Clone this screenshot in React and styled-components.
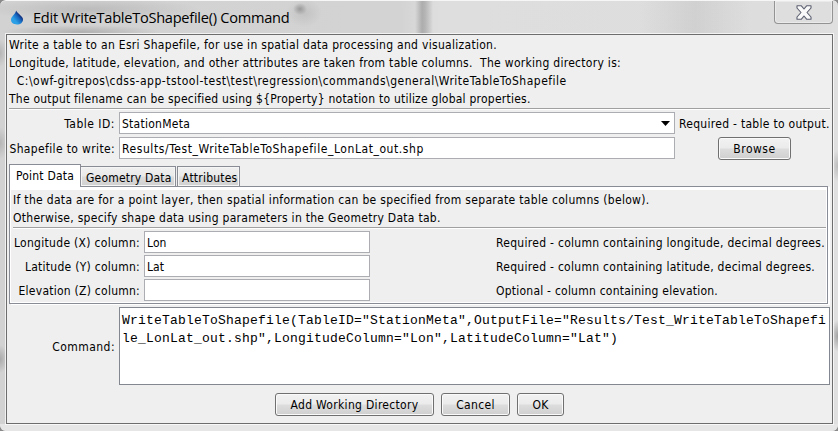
import React from "react";
import styled, { createGlobalStyle } from "styled-components";

const GlobalStyle = createGlobalStyle`
  * { box-sizing: border-box; }
  body { margin: 0; background: #8a8a8a; overflow: hidden; }
`;

const Window = styled.div`
  width: 838px;
  height: 431px;
  display: flex;
  flex-direction: column;
  border-top: 1px solid #f6f6f6;
  border-radius: 6px;
  overflow: hidden;
  color: #000;
  font: 12px "DejaVu Sans Condensed", "DejaVu Sans", sans-serif;
  white-space: pre;
  background:
    radial-gradient(ellipse 7px 6px at 300px 8px, #9a9a9a 0, transparent 100%),
    radial-gradient(ellipse 18px 14px at 304px 12px, #c2c2c2 0, transparent 100%),
    linear-gradient(90deg, transparent 415px, #adadad 422px, #b4b4b4 425px, transparent 433px) 0 0 / 100% 33px no-repeat,
    linear-gradient(90deg, transparent, rgba(200, 200, 200, 0.6) 50%, transparent) 640px 0 / 110px 33px no-repeat,
    radial-gradient(ellipse 110px 11px at 90px 8px, #bcbcbc 0, transparent 100%),
    radial-gradient(ellipse 80px 7px at 80px 31px, #b0b0b0 0, transparent 100%),
    radial-gradient(ellipse 7px 14px at 0 52px, #b5b5b5 0, transparent 100%),
    radial-gradient(ellipse 8px 16px at 0 142px, #b5b5b5 0, transparent 100%),
    radial-gradient(ellipse 8px 14px at 0 358px, #aaa 0, transparent 100%),
    radial-gradient(ellipse 7px 16px at 838px 335px, #a0a0a0 0, transparent 100%),
    radial-gradient(ellipse 7px 16px at 838px 165px, #bbb 0, transparent 100%),
    linear-gradient(#e6e6e6, #e6e6e6) 0 423px / 100% 8px no-repeat,
    linear-gradient(90deg, #d2d2d2, #d3d3d3 400px, #dedede 440px, #dddddd 800px, #e0e0e0);
`;

const TitleBar = styled.header`
  height: 33px;
  flex: none;
  display: flex;
  align-items: flex-start;
  padding: 0 5px 0 11px;
`;

const DropIcon = styled.svg`
  width: 12px;
  height: 15px;
  margin-top: 9px;
`;

const Title = styled.h1`
  margin: 4px auto 0 10px;
  font: 400 14.6px/24px "Open Sans", "Noto Sans", sans-serif;
  letter-spacing: -0.27px;
`;

const CloseButton = styled.button`
  width: 59px;
  height: 23px;
  padding: 0;
  display: flex;
  justify-content: center;
  border: 1px solid #939393;
  border-top: 0;
  border-radius: 0 0 4px 4px;
  background: #dedede;
  box-shadow: inset 0 0 0 1px #eaeaea;
  svg { width: 16px; height: 15px; margin: 4px 0 0 1px; }
`;

const Content = styled.main`
  height: 390px;
  flex: none;
  margin: 0 5px 0 6px;
  padding: 1px 2px 0;
  border: 1px solid #6d6d6d;
  background: #efefef;
  box-shadow: 0 0 0 1px rgba(255, 255, 255, 0.7);
`;

const Notes = styled.div`
  line-height: 18px;
  border-bottom: 1px solid #a0a0a0;
  box-shadow: 0 1px #fff;
  height: ${(p) => p.$height}px;
`;

const NoteLine = styled.div`
  letter-spacing: ${(p) => p.$track}px;
`;

const FormRow = styled.div`
  display: grid;
  grid-template-columns: ${(p) => p.$columns};
  column-gap: 5px;
  height: 22px;
  margin-top: ${(p) => p.$gap}px;
`;

const Label = styled.label`
  height: 22px;
  line-height: 24px;
  justify-self: end;
  margin-right: -1px;
  letter-spacing: ${(p) => p.$track}px;
`;

const Hint = styled.span`
  line-height: 24px;
  letter-spacing: ${(p) => p.$track}px;
`;

const TableHint = styled(Hint)`
  margin-left: -1px;
`;

const AxisHint = styled(Hint)`
  padding-left: 121px;
`;

const Field = styled.div`
  height: 22px;
  display: flex;
  justify-content: space-between;
  padding: 0 4px 0 2px;
  line-height: 22px;
  background: #fff;
  border: 1px solid #abadb3;
  letter-spacing: ${(p) => p.$track}px;
`;

const Arrow = styled.svg`
  width: 9px;
  height: 5px;
  margin-top: 8px;
`;

const Button = styled.button`
  width: ${(p) => p.$width}px;
  height: 23px;
  padding: 0;
  border: 1px solid #707070;
  border-radius: 3px;
  box-shadow: inset 0 0 0 1px #fafafa;
  background: linear-gradient(#f2f2f2, #ebebeb 48%, #dddddd 52%, #cfcfcf);
  font: inherit;
  line-height: 22px;
  color: #000;
  letter-spacing: ${(p) => p.$track}px;
`;

const BrowseButton = styled(Button)`
  margin-left: 38px;
`;

const Tabs = styled.div`
  display: flex;
  align-items: flex-end;
  height: 23px;
  margin-top: 5px;
`;

const Tab = styled.div`
  height: ${(p) => (p.$active ? 23 : 21)}px;
  width: ${(p) => p.$width}px;
  margin-right: ${(p) => p.$after || 0}px;
  padding-left: ${(p) => p.$inset}px;
  line-height: 22px;
  letter-spacing: ${(p) => p.$track}px;
  border: 1px solid #898c95;
  border-bottom: ${(p) => (p.$active ? "0" : "1px solid #898c95")};
  border-left-width: ${(p) => (p.$joined ? 0 : 1)}px;
  background: ${(p) => (p.$active ? "#fff" : "linear-gradient(#f0f0f0, #e9e9e9 48%, #dcdcdc 52%, #d0d0d0)")};
  box-shadow: ${(p) => (p.$active ? "none" : "inset 0 0 0 1px #f5f5f5")};
  position: relative;
`;

const TabPanel = styled.section`
  width: 819px;
  height: 118px;
  margin-top: -1px;
  border: 1px solid #898c95;
  box-shadow: 2px 1px #fff;
  background: #fff;
  padding: 3px 1px 1px;
`;

const TabBody = styled.div`
  height: 112px;
  padding: 1px 0 0 2px;
  background: #efefef;
`;

const CommandRow = styled.div`
  display: grid;
  grid-template-columns: 105px 711px;
  column-gap: 5px;
  align-items: center;
  margin-top: 3px;
`;

const CommandBox = styled.div`
  height: 78px;
  padding: 4px 0 0 2px;
  background: #fff;
  border: 1px solid #828790;
  font: 13px/18px "Liberation Mono", monospace;
  letter-spacing: 0.199px;
`;

const Actions = styled.footer`
  display: flex;
  justify-content: center;
  gap: 7px;
  margin-top: 8px;
`;

const outer = "105px 556px 1fr";
const inner = "126px 226px 1fr";

const axes = [
  { label: "Longitude (X) column:", track: 0.3, value: "Lon", hint: "Required - column containing longitude, decimal degrees.", hintTrack: 0.29 },
  { label: "Latitude (Y) column:", track: 0.27, value: "Lat", hint: "Required - column containing latitude, decimal degrees.", hintTrack: 0.287 },
  { label: "Elevation (Z) column:", track: 0.25, value: "", hint: "Optional - column containing elevation.", hintTrack: 0.227 },
];

export default function App() {
  return (
    <Window>
      <GlobalStyle />
      <TitleBar>
        <DropIcon viewBox="0 0 12 16" preserveAspectRatio="none">
          <defs>
            <linearGradient id="drop" x1="0" y1="1" x2="1" y2="0">
              <stop offset="0.3" stopColor="#2ba0e6" />
              <stop offset="0.55" stopColor="#1768c0" />
              <stop offset="0.75" stopColor="#10206c" />
            </linearGradient>
          </defs>
          <path d="M5 .5C5 4 0 6.500 0 10.500C0 13.500 2.500 15.500 6 15.500S12 13 12 10C12 6.500 7 4.500 5 .5Z" fill="url(#drop)" />
        </DropIcon>
        <Title>Edit WriteTableToShapefile() Command</Title>
        <CloseButton aria-label="Close">
          <svg viewBox="0 0 16 15">
            <path d="M1 .8H5.400L8 4L10.600 .8H15V3L11 7.500L15 12V14.200H10.600L8 11L5.400 14.200H1V12L5 7.500L1 3Z" fill="#fafafa" stroke="#5c6070" strokeWidth="1.100" strokeLinejoin="round" />
          </svg>
        </CloseButton>
      </TitleBar>
      <Content>
        <Notes $height={73}>
          <NoteLine $track={0.296}>Write a table to an Esri Shapefile, for use in spatial data processing and visualization.</NoteLine>
          <NoteLine $track={0.286}>Longitude, latitude, elevation, and other attributes are taken from table columns.  The working directory is:</NoteLine>
          <NoteLine $track={0.49}>{"  C:\\owf-gitrepos\\cdss-app-tstool-test\\test\\regression\\commands\\general\\WriteTableToShapefile"}</NoteLine>
          <NoteLine $track={0.23}>{"The output filename can be specified using ${Property} notation to utilize global properties."}</NoteLine>
        </Notes>
        <FormRow $columns={outer} $gap={3}>
          <Label $track={0.5}>Table ID:</Label>
          <Field $track={0.256}>
            StationMeta
            <Arrow viewBox="0 0 9 5"><path d="M0 0H9L4.500 5Z" /></Arrow>
          </Field>
          <TableHint $track={0.29}>Required - table to output.</TableHint>
        </FormRow>
        <FormRow $columns={outer} $gap={3}>
          <Label $track={0.36}>Shapefile to write:</Label>
          <Field $track={0.57}>Results/Test_WriteTableToShapefile_LonLat_out.shp</Field>
          <BrowseButton $width={73} $track={0.5}>Browse</BrowseButton>
        </FormRow>
        <Tabs>
          <Tab $active $width={72} $inset={6} $track={0.2}>Point Data</Tab>
          <Tab $joined $width={95} $inset={5} $after={1} $track={0.19}>Geometry Data</Tab>
          <Tab $width={63} $inset={4} $track={0.22}>Attributes</Tab>
        </Tabs>
        <TabPanel>
          <TabBody>
            <Notes $height={37}>
              <NoteLine $track={0.315}>If the data are for a point layer, then spatial information can be specified from separate table columns (below).</NoteLine>
              <NoteLine $track={0.28}>Otherwise, specify shape data using parameters in the Geometry Data tab.</NoteLine>
            </Notes>
            {axes.map((a, i) => (
              <FormRow key={a.label} $columns={inner} $gap={i ? 2 : 3}>
                <Label $track={a.track}>{a.label}</Label>
                <Field $track={0.1}>{a.value}</Field>
                <AxisHint $track={a.hintTrack}>{a.hint}</AxisHint>
              </FormRow>
            ))}
          </TabBody>
        </TabPanel>
        <CommandRow>
          <Label $track={0.45}>Command:</Label>
          <CommandBox>
            {'WriteTableToShapefile(TableID="StationMeta",OutputFile="Results/Test_WriteTableToShapefi\nle_LonLat_out.shp",LongitudeColumn="Lon",LatitudeColumn="Lat")'}
          </CommandBox>
        </CommandRow>
        <Actions>
          <Button $width={159} $track={0.31}>Add Working Directory</Button>
          <Button $width={69} $track={0.32}>Cancel</Button>
          <Button $width={47} $track={0.3}>OK</Button>
        </Actions>
      </Content>
    </Window>
  );
}
